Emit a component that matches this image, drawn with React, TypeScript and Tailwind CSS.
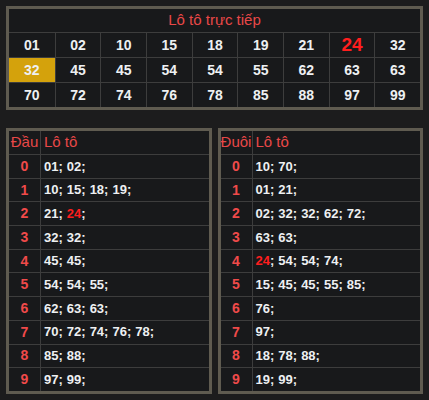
import React from 'react';

const TOP_ROWS = [
  ['01', '02', '10', '15', '18', '19', '21', '24', '32'],
  ['32', '45', '45', '54', '54', '55', '62', '63', '63'],
  ['70', '72', '74', '76', '78', '85', '88', '97', '99'],
];

const HOT = '24';

const DAU = [
  ['01', '02'],
  ['10', '15', '18', '19'],
  ['21', '24'],
  ['32', '32'],
  ['45', '45'],
  ['54', '54', '55'],
  ['62', '63', '63'],
  ['70', '72', '74', '76', '78'],
  ['85', '88'],
  ['97', '99'],
];

const DUOI = [
  ['10', '70'],
  ['01', '21'],
  ['02', '32', '32', '62', '72'],
  ['63', '63'],
  ['24', '54', '54', '74'],
  ['15', '45', '45', '55', '85'],
  ['76'],
  ['97'],
  ['18', '78', '88'],
  ['19', '99'],
];

const LotoList = ({ title, rows }: { title: string; rows: string[][] }) => (
  <div className="flex-1 border-[3px] border-[#5f5b50] bg-[#18191b]">
    <div className="flex h-[23px] items-center text-[15px] text-[#e84848]">
      <div className="w-[31px] text-center">{title}</div>
      <div className="flex-1 border-l border-[#3d3d3d] h-full flex items-center pl-[3px]">Lô tô</div>
    </div>
    {rows.map((nums, i) => (
      <div key={i} className="flex h-[23.7px] border-t border-[#3d3d3d] items-center">
        <div className="w-[31px] text-center text-[14px] font-bold text-[#f04a4a]">{i}</div>
        <div className="flex-1 h-full border-l border-[#3d3d3d] flex items-center pl-[3px] text-[13px] font-bold text-[#eef0f2]">
          {nums.map((n, j) => (
            <span key={j} className="mr-[4px]">
              <span className={n === HOT ? 'text-[#ff1e1e]' : ''}>{n}</span>;
            </span>
          ))}
        </div>
      </div>
    ))}
  </div>
);

export default function App() {
  return (
    <div className="w-[429px] h-[400px] bg-[#1c1c1d] px-[6px] pt-[6px] font-['Liberation_Sans',Arial,sans-serif]">
      <div className="border-[3px] border-[#5f5b50] bg-[#18191b]">
        <div className="h-[23px] flex items-center justify-center text-[15px] text-[#e84848]">Lô tô trực tiếp</div>
        {TOP_ROWS.map((row, r) => (
          <div key={r} className="grid grid-cols-9 border-t border-[#3d3d3d]">
            {row.map((n, c) => {
              const gold = r === 1 && c === 0;
              const hot = n === HOT;
              return (
                <div
                  key={c}
                  className={`h-[24px] flex items-center justify-center font-bold ${c > 0 ? 'border-l border-[#3d3d3d]' : ''} ${gold ? 'bg-[#d4a20c]' : ''} ${hot ? 'text-[19px] text-[#ff1e1e]' : 'text-[14px] text-[#eef0f2]'}`}
                >
                  {n}
                </div>
              );
            })}
          </div>
        ))}
      </div>
      <div className="flex gap-[6px] mt-[18px]">
        <LotoList title="Đầu" rows={DAU} />
        <LotoList title="Đuôi" rows={DUOI} />
      </div>
    </div>
  );
}
